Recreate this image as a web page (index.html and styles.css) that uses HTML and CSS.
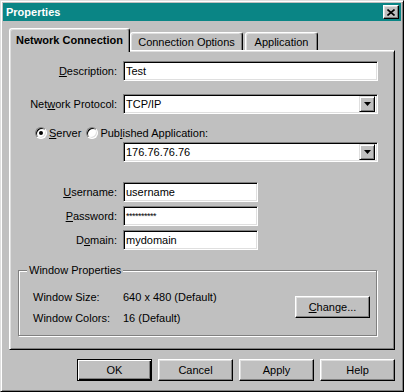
FILE: index.html
```html
<!DOCTYPE html>
<html lang="en">
<head>
    <meta charset="UTF-8">
    <title>Properties</title>
    <link rel="stylesheet" href="styles.css">
</head>
<body>
    <div class="window">
        <div class="titlebar">
            <span class="title">Properties</span>
            <button class="close-btn" aria-label="Close">
                <svg width="8" height="7" viewBox="0 0 8 7"><path d="M0.5 0.5 L7.5 6.5 M7.5 0.5 L0.5 6.5" stroke="#000" stroke-width="1.6" fill="none"/></svg>
            </button>
        </div>

        <div class="dialog-body">
            <div class="tabs">
                <div class="tab active">Network Connection</div>
                <div class="tab tab-options">Connection Options</div>
                <div class="tab tab-app">Application</div>
            </div>

            <div class="panel">
                <div class="row row-desc">
                    <label class="label"><u>D</u>escription:</label>
                    <div class="field">Test</div>
                </div>
                <div class="row row-proto">
                    <label class="label">Net<u>w</u>ork Protocol:</label>
                    <div class="field combo">
                        <span>TCP/IP</span>
                        <span class="drop-btn"><svg width="7" height="4" viewBox="0 0 7 4"><polygon points="0,0 7,0 3.5,4" fill="#000"/></svg></span>
                    </div>
                </div>
                <div class="radio-row">
                    <span class="radio checked"></span>
                    <span class="radio-text"><u>S</u>erver</span>
                    <span class="radio"></span>
                    <span class="radio-text">Pub<u>l</u>ished Application:</span>
                </div>
                <div class="row row-ip">
                    <div class="field combo">
                        <span>176.76.76.76</span>
                        <span class="drop-btn"><svg width="7" height="4" viewBox="0 0 7 4"><polygon points="0,0 7,0 3.5,4" fill="#000"/></svg></span>
                    </div>
                </div>
                <div class="row row-user">
                    <label class="label"><u>U</u>sername:</label>
                    <div class="field short">username</div>
                </div>
                <div class="row row-pass">
                    <label class="label"><u>P</u>assword:</label>
                    <div class="field short password">**********</div>
                </div>
                <div class="row row-domain">
                    <label class="label">D<u>o</u>main:</label>
                    <div class="field short">mydomain</div>
                </div>

                <fieldset class="group">
                    <legend>Window Properties</legend>
                    <div class="group-grid">
                        <span>Window Size:</span>
                        <span>640 x 480 (Default)</span>
                        <button class="btn change-btn"><u>C</u>hange...</button>
                        <span>Window Colors:</span>
                        <span>16 (Default)</span>
                    </div>
                </fieldset>
            </div>

            <div class="footer">
                <button class="btn default">OK</button>
                <button class="btn">Cancel</button>
                <button class="btn">Apply</button>
                <button class="btn">Help</button>
            </div>
        </div>
    </div>
</body>
</html>
```

FILE: styles.css
```css
body {
    margin: 0;
    background: #c0c0c0;
    font-family: "Liberation Sans", Arial, sans-serif;
    font-size: 11px;
    color: #000;
}

.window {
    width: 404px;
    height: 392px;
    box-sizing: border-box;
    border: 1px solid;
    border-color: #dfdfdf #000 #000 #dfdfdf;
    box-shadow: inset 1px 1px 0 #fff, inset -1px -1px 0 #808080;
    padding: 2px;
    background: #c0c0c0;
}

.titlebar {
    height: 18px;
    display: flex;
    align-items: center;
    justify-content: space-between;
    padding: 0 2px 0 3px;
    background: #0a8585;
}

.title {
    color: #fff;
    font-weight: bold;
}

.close-btn {
    width: 16px;
    height: 14px;
    padding: 0;
    display: flex;
    align-items: center;
    justify-content: center;
    background: #c0c0c0;
    border: 1px solid;
    border-color: #fff #000 #000 #fff;
    box-shadow: inset -1px -1px 0 #808080, inset 1px 1px 0 #dfdfdf;
}

.dialog-body {
    padding: 7px 6px 0 6px;
}

/* tabs */

.tabs {
    display: flex;
    align-items: flex-end;
    height: 22px;
}

.tab {
    box-sizing: border-box;
    height: 18px;
    display: flex;
    align-items: center;
    justify-content: center;
    border: 1px solid;
    border-bottom: none;
    border-color: #fff #000 #000 #fff;
    border-radius: 3px 3px 0 0;
    box-shadow: inset -1px 0 0 #808080, inset 1px 1px 0 #dfdfdf;
    background: #c0c0c0;
}

.tab.active {
    position: relative;
    z-index: 1;
    width: 121px;
    height: 24px;
    margin-bottom: -2px;
    padding-bottom: 2px;
    font-weight: bold;
}

.tab-options {
    width: 113px;
}

.tab-app {
    width: 73px;
    margin-left: 2px;
}

.panel {
    box-sizing: border-box;
    height: 300px;
    border: 1px solid;
    border-color: #fff #000 #000 #fff;
    box-shadow: inset 1px 1px 0 #dfdfdf, inset -1px -1px 0 #808080;
    padding: 0 16px 0 8px;
}

/* form rows */

.row {
    display: flex;
    align-items: center;
    gap: 6px;
}

.label {
    width: 99px;
    text-align: right;
}

.field {
    box-sizing: border-box;
    flex: 1;
    height: 20px;
    display: flex;
    align-items: center;
    padding-left: 2px;
    background: #fff;
    border: 1px solid;
    border-color: #808080 #fff #fff #808080;
    box-shadow: inset 1px 1px 0 #000, inset -1px -1px 0 #dfdfdf;
}

.field.short {
    flex: 0 0 135px;
}

.password {
    font-size: 9px;
    letter-spacing: -0.5px;
}

.combo {
    justify-content: space-between;
    padding-right: 2px;
}

.drop-btn {
    box-sizing: border-box;
    width: 16px;
    height: 16px;
    display: flex;
    align-items: center;
    justify-content: center;
    background: #c0c0c0;
    border: 1px solid;
    border-color: #dfdfdf #000 #000 #dfdfdf;
    box-shadow: inset 1px 1px 0 #fff, inset -1px -1px 0 #808080;
}

.row-desc { margin-top: 10px; }
.row-proto { margin-top: 13px; }
.row-ip { margin-top: 2px; padding-left: 105px; }
.row-user { margin-top: 20px; }
.row-pass { margin-top: 4px; }
.row-domain { margin-top: 4px; }

.radio-row {
    display: flex;
    align-items: center;
    height: 14px;
    margin-top: 12px;
    padding-left: 17px;
}

.radio {
    box-sizing: border-box;
    width: 12px;
    height: 12px;
    border-radius: 50%;
    position: relative;
    background: #fff;
    border: 1px solid;
    border-color: #808080 #fff #fff #808080;
    box-shadow: inset 1px 1px 0 #000, inset -1px -1px 0 #dfdfdf;
}

.radio.checked::after {
    content: "";
    position: absolute;
    left: 3px;
    top: 3px;
    width: 4px;
    height: 4px;
    border-radius: 50%;
    background: #000;
}

.radio-text {
    margin: 0 5px 0 2px;
}

/* window properties group */

.group {
    margin: 14px 1px 0 0;
    padding: 0 6px 5px 14px;
    height: 72px;
    box-sizing: border-box;
    border: 1px solid #808080;
    box-shadow: inset 1px 1px 0 #fff, 1px 1px 0 #fff;
}

.group legend {
    margin-left: -6px;
    padding: 0 2px;
    background: #c0c0c0;
}

.group-grid {
    display: grid;
    grid-template-columns: 90px 1fr auto;
    grid-template-rows: 21px 21px;
    align-items: center;
    margin-top: 10px;
}

.change-btn {
    grid-row: 1 / 3;
    grid-column: 3;
}

/* buttons */

.btn {
    box-sizing: border-box;
    width: 75px;
    height: 22px;
    padding: 0;
    font-family: inherit;
    font-size: 11px;
    color: #000;
    background: #c0c0c0;
    border: 1px solid;
    border-color: #fff #000 #000 #fff;
    box-shadow: inset -1px -1px 0 #808080, inset 1px 1px 0 #dfdfdf;
}

.btn.default {
    border-color: #000;
    box-shadow: inset 1px 1px 0 #fff, inset -1px -1px 0 #000, inset -2px -2px 0 #808080;
}

.footer {
    display: flex;
    justify-content: flex-end;
    gap: 6px;
    padding-top: 9px;
}
```
